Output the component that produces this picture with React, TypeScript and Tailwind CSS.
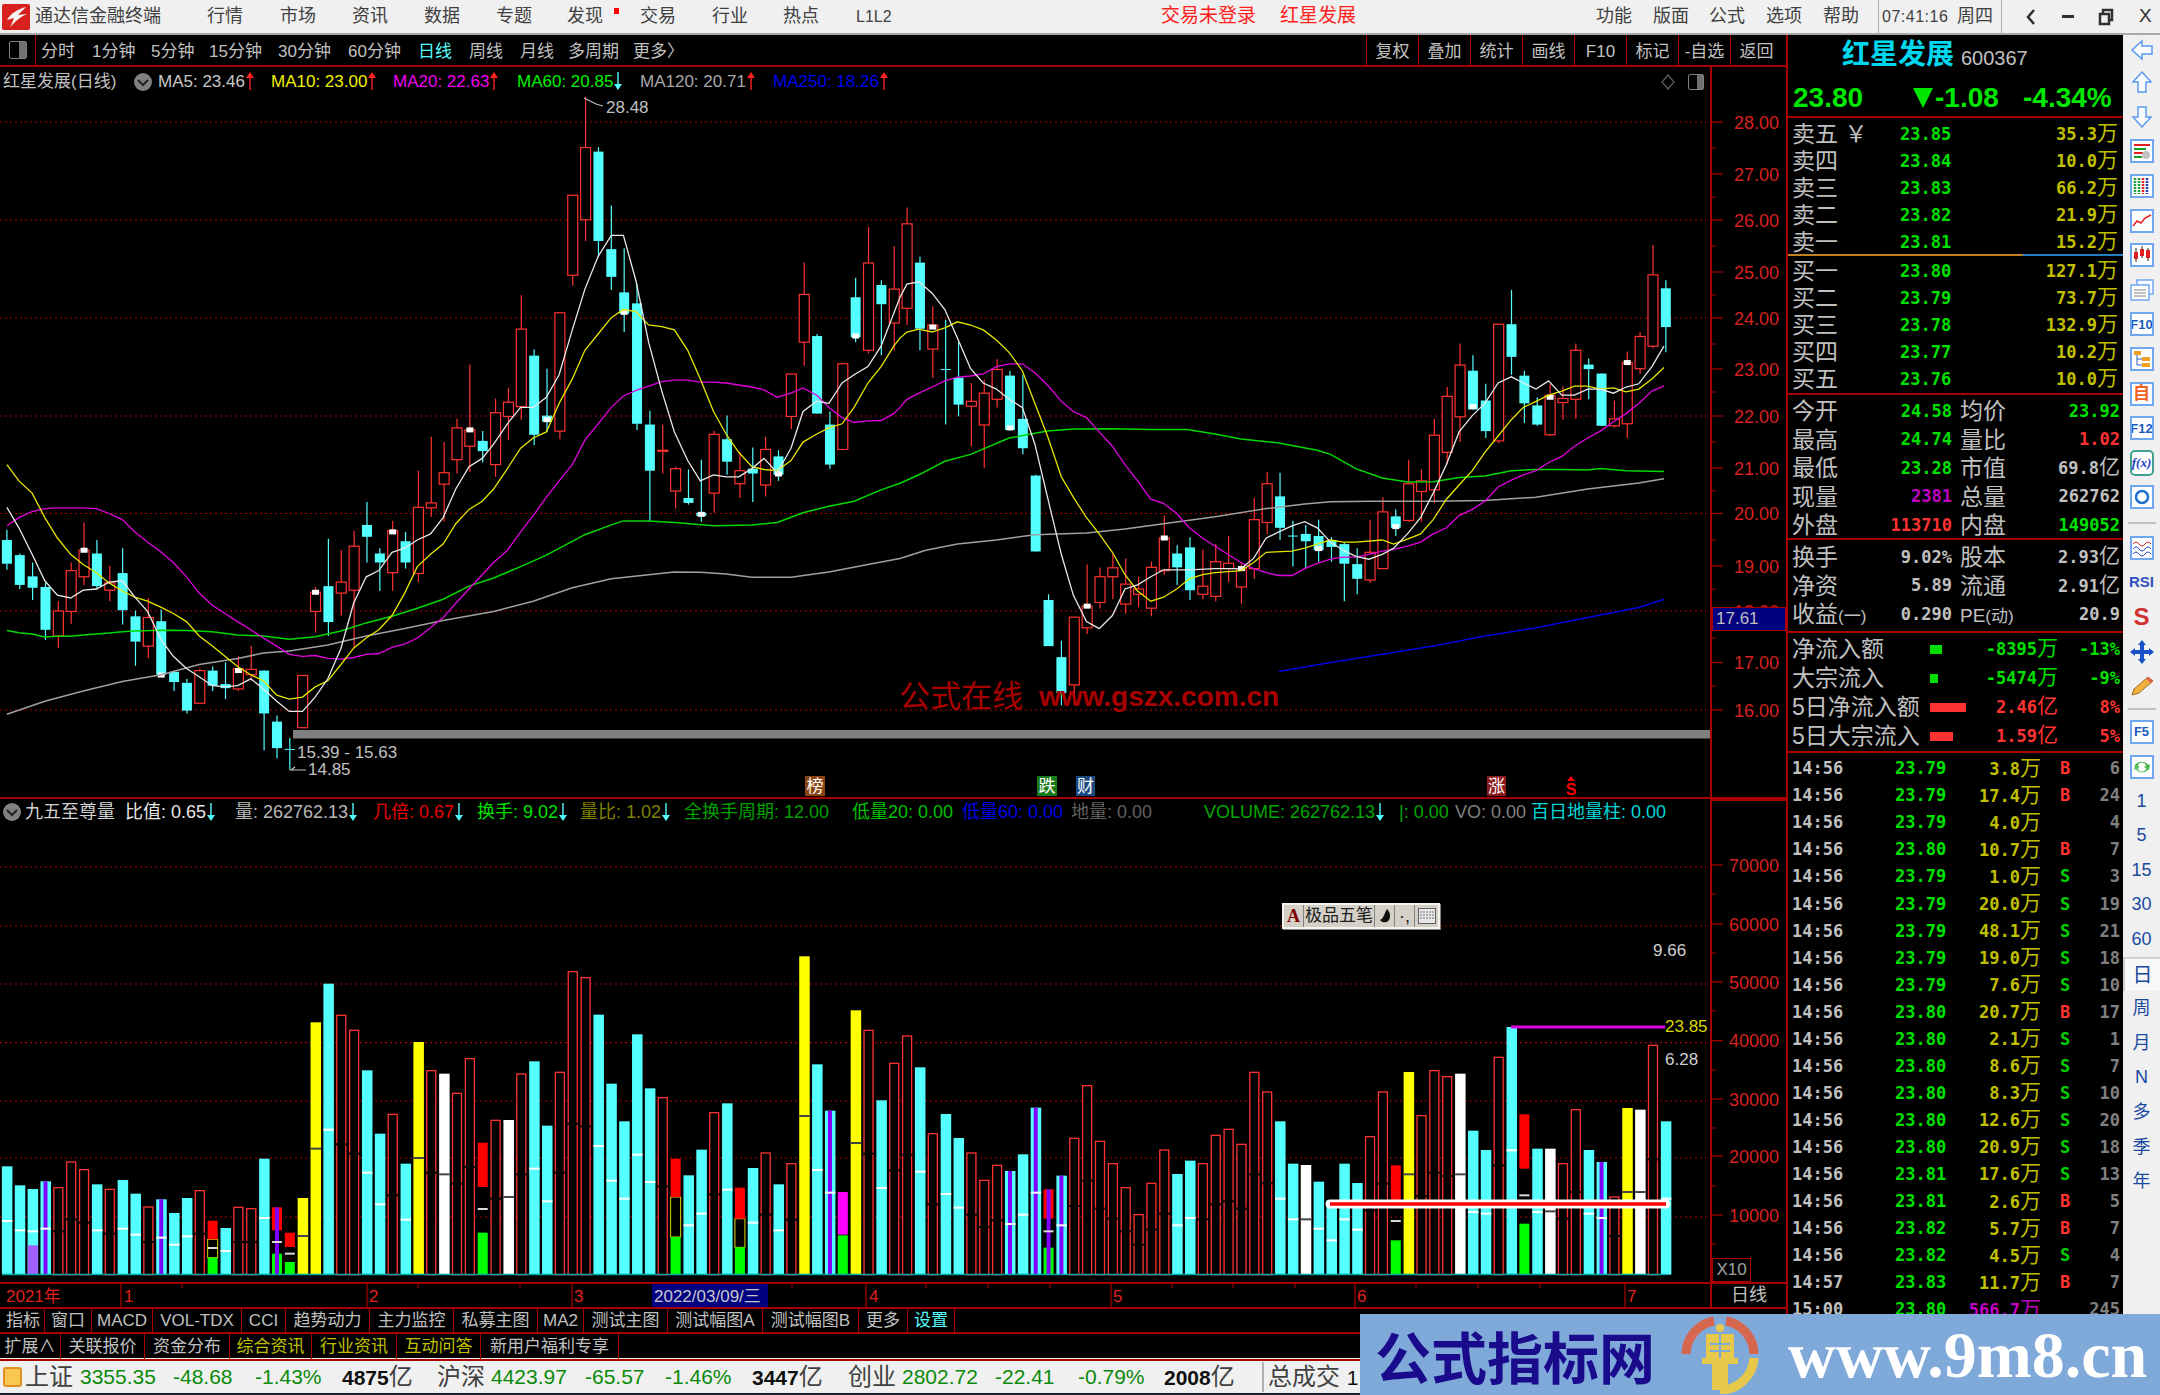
import React from 'react';

type CandleRow = [string, number, number, number, number, number?];
type VolRow = [string, number, number, number?, number?, string?];

// wick top, body top, body bottom, wick bottom, white dot
const candles: CandleRow[] = [
  ['c', 980, 1005, 1063, 1078], ['c', 1038, 1042, 1115, 1125], ['c', 1060, 1094, 1122, 1152], ['c', 1110, 1120, 1225, 1250],
  ['r', 1155, 1179, 1240, 1270], ['r', 1060, 1080, 1180, 1210], ['r', 962, 1030, 1095, 1115, 1030], ['c', 1005, 1038, 1118, 1125],
  ['r', 1068, 1110, 1128, 1155], ['c', 1025, 1086, 1177, 1212], ['c', 1178, 1192, 1254, 1313], ['r', 1147, 1195, 1265, 1295],
  ['c', 1175, 1204, 1335, 1340, 1336], ['c', 1325, 1328, 1353, 1375], ['c', 1345, 1355, 1423, 1430], ['r', 1320, 1325, 1405, 1405],
  ['c', 1315, 1325, 1362, 1375], ['c', 1305, 1358, 1368, 1395], ['r', 1290, 1320, 1370, 1375, 1325], ['r', 1265, 1322, 1335, 1350],
  ['c', 1325, 1325, 1430, 1520], ['c', 1435, 1450, 1515, 1540], ['c', 1490, 1517, 1519, 1568], ['r', 1337, 1337, 1465, 1465],
  ['r', 1120, 1133, 1180, 1232, 1133], ['c', 1002, 1118, 1206, 1240], ['r', 1030, 1108, 1135, 1190], ['r', 982, 1020, 1128, 1270],
  ['c', 912, 968, 997, 1060], ['c', 1025, 1038, 1060, 1130], ['r', 958, 982, 1085, 1130, 985], ['c', 985, 1008, 1060, 1075],
  ['r', 835, 925, 1087, 1108], ['r', 752, 914, 926, 948], ['r', 765, 840, 868, 960], ['r', 708, 730, 808, 842],
  ['r', 575, 735, 775, 838, 735], ['c', 738, 762, 787, 815], ['r', 658, 693, 820, 850], ['r', 632, 667, 702, 760],
  ['r', 405, 488, 678, 710], ['c', 538, 553, 747, 772], ['c', 585, 700, 715, 740, 710], ['r', 448, 448, 738, 758],
  ['r', 160, 160, 356, 382], ['r', -82, 43, 220, 272], ['c', 42, 53, 272, 312], ['c', 185, 292, 360, 392],
  ['c', 290, 398, 450, 495, 447], ['c', 378, 425, 720, 735], ['c', 688, 722, 835, 958], ['r', 722, 785, 787, 842],
  ['r', 825, 830, 885, 928], ['c', 832, 902, 914, 918], ['c', 808, 938, 946, 960, 942], ['r', 738, 746, 890, 938],
  ['c', 700, 758, 813, 845], ['r', 790, 835, 867, 902], ['c', 778, 830, 842, 912], ['r', 752, 783, 870, 898],
  ['c', 785, 800, 845, 860, 843], ['r', 598, 598, 702, 733], ['r', 325, 403, 520, 578], ['c', 500, 505, 695, 695],
  ['c', 690, 722, 820, 830], ['r', 573, 573, 783, 783], ['c', 362, 410, 508, 520, 505], ['r', 238, 326, 540, 548],
  ['c', 368, 380, 427, 552], ['r', 285, 390, 473, 540],
  ['r', 190, 230, 437, 478], ['c', 310, 325, 487, 540], ['r', 432, 478, 537, 607, 483], ['c', 465, 586, 588, 722],
  ['c', 520, 607, 673, 702], ['r', 620, 665, 677, 775], ['r', 612, 645, 723, 828], ['r', 562, 587, 660, 680],
  ['c', 590, 602, 735, 738, 730], ['c', 600, 708, 780, 795], ['c', 845, 847, 1033, 1033], ['c', 1138, 1152, 1265, 1265],
  ['c', 1252, 1292, 1380, 1410], ['r', 1194, 1194, 1360, 1410], ['r', 1065, 1167, 1220, 1235, 1167], ['r', 1072, 1095, 1158, 1173],
  ['r', 1040, 1073, 1095, 1150], ['r', 1050, 1113, 1162, 1185], ['r', 1095, 1125, 1138, 1170], ['r', 1058, 1072, 1172, 1192],
  ['r', 945, 1000, 1080, 1090, 1000], ['c', 1018, 1038, 1072, 1115], ['c', 998, 1023, 1128, 1152], ['r', 1028, 1118, 1138, 1150],
  ['r', 1015, 1058, 1143, 1155], ['r', 995, 1062, 1075, 1108], ['r', 1060, 1075, 1120, 1162, 1075], ['r', 902, 955, 1075, 1100],
  ['r', 838, 867, 962, 990], ['c', 840, 898, 975, 1005], ['c', 958, 994, 996, 1070], ['c', 968, 990, 1008, 1075],
  ['c', 955, 995, 1030, 1058, 1026], ['c', 998, 1005, 1022, 1058], ['c', 1012, 1015, 1063, 1155], ['c', 1025, 1064, 1100, 1138],
  ['r', 955, 1035, 1103, 1110], ['r', 900, 936, 1075, 1075], ['c', 930, 947, 975, 995, 972], ['r', 808, 867, 957, 960],
  ['r', 832, 860, 886, 960], ['r', 708, 748, 882, 915], ['r', 630, 653, 790, 820], ['r', 523, 576, 703, 765],
  ['c', 552, 590, 685, 685, 678], ['c', 622, 663, 738, 755], ['r', 476, 476, 762, 768], ['c', 392, 476, 556, 600],
  ['c', 590, 602, 670, 718], ['c', 655, 675, 722, 725], ['r', 622, 650, 747, 750, 655], ['r', 628, 658, 668, 710],
  ['r', 523, 540, 660, 708], ['c', 560, 575, 586, 660], ['c', 597, 597, 725, 725], ['r', 663, 708, 725, 730],
  ['r', 543, 570, 720, 755, 570], ['r', 495, 506, 585, 598], ['r', 282, 355, 530, 535], ['c', 368, 388, 483, 545],
];

const L = (p: number[]) => {
  const out: string[] = [];
  for (let i = 0; i < p.length; i += 2) out.push((p[i] * 0.574).toFixed(1) + ',' + (130 + p[i + 1] * 0.408).toFixed(1));
  return out.join(' ');
};
const R = (p: number[]) => {
  const out: string[] = [];
  for (let i = 0; i < p.length; i += 2) out.push((900 + p[i] * 0.574).toFixed(1) + ',' + (130 + p[i + 1] * 0.408).toFixed(1));
  return out.join(' ');
};

const ma5 = L([12,925,33,975,56,1040,78,1105,100,1140,123,1147,145,1128,168,1125,190,1108,213,1105,235,1145,257,1180,281,1250,302,1290,325,1320,347,1340,370,1362,392,1365,414,1362,437,1345,459,1370,482,1400,504,1425,527,1425,549,1390,571,1345,594,1270,616,1160,638,1095,660,1080,683,1035,705,1025,727,1005,750,990,772,950,794,880,817,825,840,805,860,770,884,720,907,680,929,680,952,655,974,600,997,490,1019,390,1042,310,1065,258,1086,258,1108,370,1130,520,1153,640,1175,740,1198,810,1220,860,1243,845,1265,850,1287,850,1310,830,1331,805,1354,840,1378,780,1399,690,1423,665,1444,670,1467,620,1488,600,1512,580,1535,530,1557,450,1568,410])
  + ' ' + R([12,378,33,372,56,400,78,440,100,510,123,585,145,620,168,635,190,660,213,680,235,770,257,900,281,1040,302,1140,325,1205,347,1222,370,1190,392,1125,414,1115,437,1095,459,1078,482,1078,504,1078,549,1075,594,1075,616,1050,638,1000,660,985,683,970,705,960,727,975,750,1010,772,1030,794,1045,817,1052,840,1040,860,1025,884,990,907,950,929,890,952,820,974,740,997,700,1019,670,1042,620,1065,605,1086,620,1108,635,1130,615,1153,650,1175,650,1198,635,1220,635,1243,645,1265,630,1287,622,1310,580,1331,530]);
const ma10 = L([12,820,33,860,56,890,78,950,100,1000,123,1040,145,1065,168,1085,190,1110,213,1130,235,1145,257,1155,281,1170,302,1185,325,1205,347,1240,370,1265,392,1290,414,1315,437,1335,459,1350,482,1385,504,1395,527,1390,549,1365,571,1350,594,1310,616,1270,638,1245,660,1225,683,1190,705,1135,727,1070,750,1040,772,1015,794,965,817,930,840,910,860,880,884,830,907,780,929,755,952,740,974,670,997,610,1019,540,1042,500,1065,460,1086,440,1108,445,1130,478,1153,482,1175,490,1198,540,1220,610,1243,690,1265,745,1287,790,1310,825,1331,832,1354,835,1378,810,1399,765,1423,745,1444,730,1467,720,1488,680,1512,620,1535,580,1557,530,1568,510])
  + ' ' + R([12,495,33,488,56,495,78,485,100,470,123,478,145,490,168,515,190,545,213,590,235,670,257,750,281,850,302,900,325,950,347,990,370,1035,392,1090,414,1130,437,1155,459,1145,482,1125,504,1100,527,1090,549,1085,594,1080,616,1060,638,1035,683,1032,705,1025,727,1015,750,1005,772,1010,794,1010,840,1005,860,1015,884,1003,907,990,929,955,952,905,974,870,997,835,1019,790,1042,750,1065,710,1086,680,1108,665,1130,650,1153,640,1175,628,1198,628,1220,635,1243,632,1265,642,1287,635,1310,610,1331,582]);
const ma20 = L([12,970,33,950,56,935,78,928,100,926,123,926,145,926,168,928,190,940,213,955,235,985,257,1010,281,1035,302,1060,325,1095,347,1135,370,1165,392,1185,414,1205,437,1225,459,1245,482,1265,504,1285,527,1290,549,1288,571,1295,594,1297,616,1293,638,1285,660,1283,683,1268,705,1260,727,1245,750,1220,772,1195,794,1160,817,1125,840,1090,860,1060,884,1030,907,985,929,945,952,900,974,860,997,820,1019,760,1042,720,1065,680,1086,652,1108,638,1130,628,1153,617,1175,613,1198,613,1220,618,1243,618,1265,620,1287,625,1310,630,1331,637,1354,655,1378,645,1399,632,1423,650,1444,680,1467,705,1488,717,1512,713,1535,712,1557,695,1568,680])
  + ' ' + R([12,660,33,645,56,630,78,615,100,606,123,603,145,598,168,580,190,573,213,573,235,595,257,625,281,665,302,690,325,705,347,740,370,775,392,820,414,860,437,905,459,915,482,940,504,975,527,1000,549,1020,571,1040,594,1060,616,1075,638,1085,660,1092,683,1092,705,1075,727,1062,750,1052,772,1047,794,1047,817,1040,840,1032,860,1028,884,1020,907,1010,929,990,952,975,974,945,997,930,1019,910,1042,875,1065,858,1086,845,1108,835,1130,815,1153,800,1175,775,1198,755,1220,738,1243,715,1265,695,1287,670,1310,640,1331,627]);
const ma60 = L([12,1227,33,1232,56,1235,78,1243,100,1241,123,1241,145,1238,168,1235,190,1233,213,1230,235,1228,281,1226,325,1227,370,1230,414,1238,459,1240,504,1248,549,1242,594,1228,638,1208,683,1192,727,1172,772,1150,817,1118,860,1098,907,1070,952,1042,1019,992,1065,968,1086,958,1130,958,1175,962,1243,970,1310,968,1354,962,1399,938,1444,922,1488,910,1535,882,1568,866])
  + ' ' + R([33,845,78,812,123,795,190,755,257,738,302,733,370,732,437,734,500,734,549,745,594,757,660,767,727,785,750,795,794,830,840,853,884,863,929,862,974,852,1019,848,1065,835,1108,832,1153,832,1198,833,1220,830,1265,835,1331,837]);
const ma120 = L([12,1432,78,1400,145,1375,213,1352,281,1335,347,1310,414,1295,459,1282,504,1277,571,1262,638,1240,705,1222,772,1202,860,1180,929,1155,997,1122,1065,1100,1130,1090,1175,1083,1220,1084,1265,1088,1310,1096,1378,1096,1444,1083,1512,1065,1568,1050])
  + ' ' + R([45,1030,100,1015,168,1005,235,992,325,988,392,978,459,965,549,948,638,928,705,917,750,911,817,910,929,910,1019,908,1108,900,1198,880,1287,865,1331,855]);
const ma250 = R([660,1327,750,1305,840,1285,929,1265,1019,1240,1108,1220,1198,1195,1287,1170,1331,1150]);

// kind, top, mid  ('s' rows: red top, red bottom, green top, mid, colour)
const volumes: VolRow[] = [
  ['c',643,807],['c',700,835],['d',711,838],['p',688,830],['r',707,838],['r',630,802],['r',653,812],['c',697,835],['r',712,845],['c',684,830],
  ['c',725,848],['r',765,870],['p',742,857],['c',783,878],['c',738,853],['r',716,845],['s',806,862,917,888],['c',828,897],['r',766,870],['r',770,870],
  ['c',620,798],['s',766,835,905,870,'#ff0000'],['s',842,885,930,905],['y',738,852],['y',211,590],['c',95,533],['r',190,577],['r',235,605],['c',355,662],['c',545,757],
  ['r',487,730],['c',635,803],['y',270,618],['r',356,662],['w',365,667],['r',424,695],['r',320,645],['s',572,705,842,771],['r',505,740],['w',504,735],
  ['r',366,667],['c',328,650],['c',521,748],['r',361,662],['r',59,515],['r',77,523],['c',188,582],['c',395,686],['c',508,740],['c',247,608],
  ['c',409,690],['r',437,703],['s',620,735,855,0],['c',670,820],['c',593,785],['r',482,727],['c',454,713],['s',707,800,886,0],['c',648,812],['r',603,788],
  ['c',697,835],['r',635,803],['y',13,492],['c',337,654],['p',476,722],['s',720,848,850,0,'#ff00ff'],['y',175,573],['r',235,605],['c',445,708],['r',334,655],
  ['r',252,608],['c',346,659],['r',545,757],['c',486,726],['c',558,767],['r',603,788],['r',685,825],['r',640,805],['p',657,816],['c',607,788],
  ['p',467,722],['s',712,800,887,838],['p',671,820],['r',559,762],['r',401,686],['r',568,770],['r',635,800],['r',707,838],['r',788,878],['r',694,833],
  ['r',594,785],['c',666,820],['c',626,798],['r',635,802],['r',550,757],['r',532,748],['r',577,770],['r',361,667],['r',420,694],['c',508,740],
  ['c',635,802],['w',639,802],['c',689,830],['c',745,865],['c',635,802],['c',693,833],['r',554,775],['r',420,695],['s',640,745,865,807],['y',360,667],
  ['r',491,732],['r',356,662],['r',374,672],['w',365,667],['c',536,780],['c',594,785],['r',316,640],['c',225,595],['s',487,650,815,730],['c',590,780],
  ['w',590,778],['r',635,800],['r',473,720],['c',594,785],['p',630,798],['r',735,852],['y',468,720],['w',473,720],['r',280,622],['c',508,740],
];

const cx = (i: number) => 6.9 + i * 12.86;
const py = (z: number) => 130 + z * 0.408;
const vy = (z: number) => 950 + z / 3;
const CYAN = '#54ffff';
const RED = '#ff3232';
const priceGrid = [122, 220, 318, 416, 513.5, 611, 710];
const priceLabels: [string, number][] = [['28.00',122],['27.00',174],['26.00',220],['25.00',272],['24.00',318],['23.00',369],['22.00',416],['21.00',468],['20.00',513.5],['19.00',566],['18.00',611],['17.00',662.5],['16.00',710]];
const volLabels: [string, number][] = [['70000',865],['60000',924],['50000',982],['40000',1040.7],['30000',1099],['20000',1156],['10000',1215]];

function PriceChart() {
  return (
    <svg className="block w-[1710px] h-[700px]" viewBox="0 97 1710 700">
      {priceGrid.map(y => <line key={y} x1="0" x2="1710" y1={y} y2={y} stroke="#b00000" strokeWidth="1.2" strokeDasharray="2 3" />)}
      <rect x="293" y="730" width="1417" height="8.5" fill="#808080" />
      {candles.map((c, i) => {
        const x = cx(i);
        const color = c[0] === 'r' ? RED : CYAN;
        return (
          <g key={i}>
            <line x1={x} x2={x} y1={py(c[1])} y2={py(c[4])} stroke={color} strokeWidth="1.2" />
            <rect x={x - 5} y={py(c[2])} width="10" height={Math.max(1, py(c[3]) - py(c[2]))} fill={c[0] === 'r' ? '#000' : CYAN} stroke={c[0] === 'r' ? RED : 'none'} strokeWidth="1.2" />
            {c[5] !== undefined && <rect x={x - 3.5} y={py(c[5]) - 2.5} width="7" height="5" fill="#fff" />}
          </g>
        );
      })}
      <polyline points={ma120} fill="none" stroke="#a0a0a0" strokeWidth="1.5" />
      <polyline points={ma250} fill="none" stroke="#0000e0" strokeWidth="1.5" />
      <polyline points={ma60} fill="none" stroke="#00d800" strokeWidth="1.5" />
      <polyline points={ma20} fill="none" stroke="#e000e0" strokeWidth="1.3" />
      <polyline points={ma10} fill="none" stroke="#e6e600" strokeWidth="1.3" />
      <polyline points={ma5} fill="none" stroke="#e8e8e8" strokeWidth="1.3" />
      <polyline points="584,98 596,104 603,106" fill="none" stroke="#c0c0c0" strokeWidth="1.2" />
      <text x="606" y="113" fontSize="17" fill="#c0c0c0">28.48</text>
      <text x="297" y="758" fontSize="17" fill="#c0c0c0">15.39 - 15.63</text>
      <polyline points="306,770 291,770 295,767" fill="none" stroke="#c0c0c0" strokeWidth="1.2" />
      <text x="308" y="775" fontSize="17" fill="#c0c0c0">14.85</text>
      <text x="899" y="707" fontSize="31" fill="#a80000">公式在线</text>
      <text x="1039" y="706" fontSize="28" fontWeight="700" fill="#a80000">www.gszx.com.cn</text>
      <rect x="805" y="776" width="20" height="20" fill="#8b4513" />
      <text x="815" y="792" fontSize="17" fill="#fff" textAnchor="middle">榜</text>
      <rect x="1037" y="776" width="20" height="20" fill="#1a7a1a" />
      <text x="1047" y="792" fontSize="17" fill="#fff" textAnchor="middle">跌</text>
      <rect x="1076" y="776" width="19" height="20" fill="#1a4a80" />
      <text x="1085.5" y="792" fontSize="17" fill="#fff" textAnchor="middle">财</text>
      <rect x="1487" y="776" width="19" height="20" fill="#8b1a1a" />
      <text x="1496.5" y="792" fontSize="17" fill="#fff" textAnchor="middle">涨</text>
      <polygon points="1571,776 1567,781 1575,781" fill="#ff0000" />
      <text x="1571" y="795" fontSize="16" fontWeight="700" fill="#ff0000" textAnchor="middle">S</text>
    </svg>
  );
}

function VolumeChart() {
  const h = (top: number) => vy(968) - vy(top);
  return (
    <svg className="block w-[1710px] h-[452px]" viewBox="0 830 1710 452">
      {volLabels.map(l => <line key={l[0]} x1="0" x2="1710" y1={l[1]} y2={l[1]} stroke="#b00000" strokeWidth="1.2" strokeDasharray="2 3" />)}
      {volumes.map((v, i) => {
        const x = cx(i);
        const k = v[0];
        if (k === 's') {
          const mid = v[4];
          const gt = v[3] as number;
          return (
            <g key={i}>
              {(i === 16 || i === 52 || i === 57) && <rect x={x - 5} y={vy(v[2])} width="10" height={vy(gt) - vy(v[2])} fill="#000" stroke="#d8d800" strokeWidth="1" />}
              <rect x={x - 5} y={vy(v[1])} width="10" height={vy(v[2]) - vy(v[1])} fill={v[5] || '#ff0000'} />
              <rect x={x - 5} y={vy(gt)} width="10" height={vy(968) - vy(gt)} fill="#00ff00" />
              {(i === 21 || i === 81) && <rect x={x - 2} y={vy(v[1])} width="4" height={h(v[1])} fill="#8000ff" />}
              {!!mid && <rect x={x - 5} y={vy(mid) - 1} width="10" height="2" fill="#d8d8d8" />}
            </g>
          );
        }
        if (k === 'r') {
          return (
            <g key={i}>
              <rect x={x - 4.5} y={vy(v[1])} width="9" height={h(v[1])} fill="#000" stroke={RED} strokeWidth="1.3" />
              <rect x={x - 6} y={vy(v[2]) - 1} width="12" height="2" fill="#000" />
            </g>
          );
        }
        const fill = k === 'y' ? '#ffff00' : k === 'w' ? '#ffffff' : CYAN;
        return (
          <g key={i}>
            <rect x={x - 5} y={vy(v[1])} width="10.5" height={h(v[1])} fill={fill} />
            {k === 'p' && <rect x={x - 2} y={vy(v[1])} width="4" height={h(v[1])} fill="#8000ff" />}
            {k === 'd' && <rect x={x - 5} y={vy(880)} width="10.5" height={vy(968) - vy(880)} fill="#a060ff" />}
            <rect x={x - 5} y={vy(v[2]) - 1} width="10.5" height="2" fill={k === 'c' || k === 'p' || k === 'd' ? '#ffffff' : '#444444'} />
          </g>
        );
      })}
      <line x1="2" x2="1666" y1="1272.5" y2="1272.5" stroke="#00a8a8" strokeWidth="1.5" />
      <line x1="1330" x2="1666" y1="1202" y2="1202" stroke="#ffffff" strokeWidth="9" strokeLinecap="round" />
      <line x1="1330" x2="1666" y1="1202" y2="1202" stroke="#ff0000" strokeWidth="3.5" />
      <line x1="1511" x2="1665" y1="1025" y2="1025" stroke="#e000e0" strokeWidth="3" />
      <text x="1653" y="954" fontSize="17" fill="#d0d0d0">9.66</text>
      <text x="1665" y="1030" fontSize="17" fill="#d8d800">23.85</text>
      <text x="1665" y="1063" fontSize="17" fill="#d0d0d0">6.28</text>
    </svg>
  );
}

function AxisLabels({ labels, top, height, ticks }: { labels: [string, number][]; top: number; height: number; ticks: number[] }) {
  return (
    <svg className="block w-[75px]" height={height} viewBox={`1711 ${top} 75 ${height}`}>
      {ticks.map(y => <line key={y} x1="1711" x2="1715" y1={y} y2={y} stroke="#b00000" />)}
      {labels.map(l => (
        <g key={l[0]}>
          <line x1="1711" x2="1722" y1={l[1]} y2={l[1]} stroke="#b00000" strokeWidth="1.2" />
          <text x="1778" y={l[1] + 6.5} textAnchor="end" fontSize="18" fill="#d82020">{l[0]}</text>
        </g>
      ))}
    </svg>
  );
}

function DateAxis() {
  return (
    <svg className="block w-[1710px] h-[23px]" viewBox="0 0 1710 23">
      {[121, 367, 572, 866, 1111, 1355, 1625].map(x => <line key={x} x1={x} x2={x} y1="0" y2="23" stroke="#b00000" strokeWidth="1.2" />)}
      {[182, 418, 520, 792, 926, 988, 1050, 1172, 1233, 1295, 1416, 1478, 1540].map(x => <line key={x} x1={x} x2={x} y1="0" y2="4" stroke="#b00000" />)}
      <text x="6" y="18" fontSize="17" fill="#e02020">2021年</text>
      <text x="124" y="18" fontSize="17" fill="#e02020">1</text>
      <text x="369" y="18" fontSize="17" fill="#e02020">2</text>
      <text x="574" y="18" fontSize="17" fill="#e02020">3</text>
      <rect x="652" y="0" width="116" height="23" fill="#000080" />
      <text x="654" y="18" fontSize="17" fill="#c8c8c8">2022/03/09/三</text>
      <text x="869" y="18" fontSize="17" fill="#e02020">4</text>
      <text x="1113" y="18" fontSize="17" fill="#e02020">5</text>
      <text x="1357" y="18" fontSize="17" fill="#e02020">6</text>
      <text x="1627" y="18" fontSize="17" fill="#e02020">7</text>
    </svg>
  );
}

const Up = () => (
  <svg className="inline-block ml-[1px] align-[-3px]" width="8" height="18" viewBox="0 0 8 18">
    <line x1="4" x2="4" y1="2" y2="18" stroke="#ff2020" strokeWidth="1.4" />
    <polygon points="4,0 0,6 8,6" fill="#ff2020" />
  </svg>
);

const Down = () => (
  <svg className="inline-block ml-[1px] align-[-3px]" width="8" height="18" viewBox="0 0 8 18">
    <line x1="4" x2="4" y1="0" y2="14" stroke="#54ffff" strokeWidth="1.4" />
    <polygon points="4,18 0,12 8,12" fill="#54ffff" />
  </svg>
);

const Chevron = () => (
  <svg className="inline-block" width="18" height="18" viewBox="0 0 18 18">
    <circle cx="9" cy="9" r="9" fill="#808080" />
    <polyline points="4,7 9,12 14,7" fill="none" stroke="#222" strokeWidth="2" />
  </svg>
);

function TitleBar() {
  return (
    <div className="h-[35px] bg-[#f0f0f0] border-b-2 border-[#a8a8a8] flex items-center text-[18px] text-[#404040]">
      <svg className="ml-[2px]" width="28" height="26" viewBox="0 0 28 26">
        <rect width="28" height="26" rx="2" fill="#d8201c" />
        <path d="M24 3 C16 5 9 9 5 16 L12 14 L8 24 C12 18 18 13 25 10 L16 11 Z" fill="#f4f4f4" />
      </svg>
      <span className="ml-[5px] w-[172px]">通达信金融终端</span>
      <span className="w-[73px]">行情</span>
      <span className="w-[72px]">市场</span>
      <span className="w-[72px]">资讯</span>
      <span className="w-[72px]">数据</span>
      <span className="w-[71px]">专题</span>
      <span className="w-[47px] relative">发现<span className="absolute left-[47px] top-[5px] w-[5px] h-[6px] bg-[#ff0000]" /></span>
      <span className="w-[26px]" />
      <span className="w-[72px]">交易</span>
      <span className="w-[71px]">行业</span>
      <span className="w-[73px]">热点</span>
      <span className="w-[305px] text-[16px]">L1L2</span>
      <span className="w-[119px] text-[#ff2020] text-[19px]">交易未登录</span>
      <span className="w-[316px] text-[#ff2020] text-[19px]">红星发展</span>
      <span className="w-[57px]">功能</span>
      <span className="w-[56px]">版面</span>
      <span className="w-[57px]">公式</span>
      <span className="w-[57px]">选项</span>
      <span className="w-[55px]">帮助</span>
      <span className="w-[79px] h-[33px] border-l border-[#b0b0b0] pl-[3px] leading-[33px] text-[16px] tracking-[0.5px]">07:41:16</span>
      <span className="w-[44px]">周四</span>
      <span className="h-[33px] border-l border-[#b0b0b0] w-[24px]" />
      <svg width="12" height="18" viewBox="0 0 12 18"><polyline points="9,2 3,9 9,16" fill="none" stroke="#303030" strokeWidth="2.5" /></svg>
      <span className="w-[25px]" />
      <span className="w-[12px] h-[3px] bg-[#303030]" />
      <span className="w-[24px]" />
      <svg width="16" height="18" viewBox="0 0 16 18"><rect x="5" y="2" width="9" height="10" fill="none" stroke="#303030" strokeWidth="2.5" /><rect x="2" y="6" width="9" height="10" fill="#f0f0f0" stroke="#303030" strokeWidth="2.5" /></svg>
      <span className="w-[25px]" />
      <span className="text-[#303030] text-[19px]">X</span>
    </div>
  );
}

function Toolbar() {
  const cells = ['复权', '叠加', '统计', '画线', 'F10', '标记', '-自选', '返回'];
  return (
    <div className="h-[32px] flex border-b-2 border-[#a80000] text-[17px] text-[#c0c0c0]">
      <div className="w-[36px] h-[30px] border-r border-[#a80000] flex items-center justify-center">
        <span className="w-[18px] h-[18px] border border-[#808080] rounded-[2px] flex justify-end">
          <span className="w-[7px] h-full bg-[#707070]" />
        </span>
      </div>
      <div className="flex items-center pt-[3px]">
        <span className="ml-[5px] w-[51px]">分时</span>
        <span className="w-[59px]">1分钟</span>
        <span className="w-[58px]">5分钟</span>
        <span className="w-[69px]">15分钟</span>
        <span className="w-[70px]">30分钟</span>
        <span className="w-[70px]">60分钟</span>
        <span className="w-[51px] text-[#54ffff]">日线</span>
        <span className="w-[51px]">周线</span>
        <span className="w-[48px]">月线</span>
        <span className="w-[65px]">多周期</span>
        <span className="w-[733px]">更多〉</span>
      </div>
      {cells.map(c => (
        <span key={c} className="w-[52px] h-[30px] border-l border-[#a80000] pt-[3px] flex items-center justify-center">{c}</span>
      ))}
    </div>
  );
}

function PriceInfo() {
  return (
    <div className="h-[30px] flex items-center pl-[3px] text-[17px] whitespace-nowrap relative">
      <span className="w-[131px] text-[#c0c0c0]">红星发展(日线)</span>
      <span className="w-[24px] flex"><Chevron /></span>
      <span className="w-[113px] text-[#c8c8c8]">MA5: 23.46<Up /></span>
      <span className="w-[122px] text-[#f0f000]">MA10: 23.00<Up /></span>
      <span className="w-[124px] text-[#f000f0]">MA20: 22.63<Up /></span>
      <span className="w-[123px] text-[#00f000]">MA60: 20.85<Down /></span>
      <span className="w-[133px] text-[#a8a8a8]">MA120: 20.71<Up /></span>
      <span className="w-[120px] text-[#0000f0]">MA250: 18.26<Up /></span>
      <svg className="absolute left-[1660px] top-[7px]" width="16" height="16" viewBox="0 0 16 16"><polygon points="8,1 14,8 8,15 2,8" fill="none" stroke="#606060" strokeWidth="1.2" /></svg>
      <span className="absolute left-[1688px] top-[7px] w-[16px] h-[16px] border border-[#808080] rounded-[2px] flex justify-end"><span className="w-[6px] h-full bg-[#707070]" /></span>
    </div>
  );
}

function VolumeInfo() {
  return (
    <div className="h-[33px] flex items-center pl-[3px] pb-[7px] text-[18px] whitespace-nowrap">
      <span className="w-[22px] flex"><Chevron /></span>
      <span className="w-[100px] text-[#d0d0d0]">九五至尊量</span>
      <span className="w-[110px] text-[#e8e8e8]">比值: 0.65<Down /></span>
      <span className="w-[138px] text-[#b8b8b8]">量: 262762.13<Down /></span>
      <span className="w-[104px] text-[#e80000]">几倍: 0.67<Down /></span>
      <span className="w-[103px] text-[#00e000]">换手: 9.02<Down /></span>
      <span className="w-[104px] text-[#808000]">量比: 1.02<Down /></span>
      <span className="w-[168px] text-[#00a000]">全换手周期: 12.00</span>
      <span className="w-[110px] text-[#00c000]">低量20: 0.00</span>
      <span className="w-[109px] text-[#0000e8]">低量60: 0.00</span>
      <span className="w-[133px] text-[#606060]">地量: 0.00</span>
      <span className="w-[195px] text-[#00a800]">VOLUME: 262762.13<Down /></span>
      <span className="w-[56px] text-[#00a800]">|: 0.00</span>
      <span className="w-[76px] text-[#808080]">VO: 0.00</span>
      <span className="text-[#00d8d8]">百日地量柱: 0.00</span>
    </div>
  );
}

function ImeBar() {
  return (
    <div className="absolute left-[1282px] top-[903px] w-[158px] h-[26px] bg-[#d4d0c8] border-2 border-[#f4f4ec] shadow-[1px_1px_0_#808080] flex items-stretch text-[18px] text-[#202020] leading-[22px]">
      <span className="w-[20px] text-center font-['Liberation_Serif',serif] font-bold text-[#800000] border-r border-[#808080]">A</span>
      <span className="w-[71px] text-center border-r border-[#808080] whitespace-nowrap text-[17px]">极品五笔</span>
      <span className="w-[20px] flex items-center justify-center border-r border-[#808080]">
        <svg width="12" height="16" viewBox="0 0 12 16"><path d="M8 1 C5 6 5 10 1 12 C4 16 11 15 11 8 C11 5 10 3 8 1 Z" fill="#101010" /></svg>
      </span>
      <span className="w-[20px] text-center border-r border-[#808080]">·,</span>
      <span className="flex-1 flex items-center justify-center">
        <svg width="18" height="16" viewBox="0 0 18 16"><rect x="0.5" y="0.5" width="17" height="15" fill="#e8e8e8" stroke="#606060" /><path d="M2 4h14M2 7h14M2 10h14" stroke="#707070" strokeDasharray="2 1" /></svg>
      </span>
    </div>
  );
}

function TabRows() {
  const first: [string, string][] = [
    ['指标', 'w-[43px]'], ['窗口', 'w-[47px]'], ['MACD', 'w-[61px]'], ['VOL-TDX', 'w-[89px]'], ['CCI', 'w-[44px]'], ['趋势动力', 'w-[84px]'], ['主力监控', 'w-[84px]'], ['私募主图', 'w-[84px]'], ['MA2', 'w-[46px]'], ['测试主图', 'w-[84px]'], ['测试幅图A', 'w-[95px]'], ['测试幅图B', 'w-[96px]'], ['更多', 'w-[49px]'],
  ];
  const second: [string, string, string][] = [
    ['扩展∧', 'w-[61px]', 'text-[#c0c0c0]'], ['关联报价', 'w-[84px]', 'text-[#c0c0c0]'], ['资金分布', 'w-[85px]', 'text-[#c0c0c0]'], ['综合资讯', 'w-[82px]', 'text-[#c0c000]'], ['行业资讯', 'w-[85px]', 'text-[#c0c000]'], ['互动问答', 'w-[84px]', 'text-[#c0c000]'], ['新用户福利专享', 'w-[138px]', 'text-[#c0c0c0]'],
  ];
  return (
    <div className="text-[17px]">
      <div className="h-[25px] flex pl-[2px] border-b-2 border-[#a80000] text-[#c0c0c0]">
        {first.map(t => (
          <span key={t[0]} className={`${t[1]} border-r border-[#a80000] flex items-center justify-center whitespace-nowrap`}>{t[0]}</span>
        ))}
        <span className="w-[47px] flex items-center justify-center text-[#54ffff] border-r border-[#a80000]">设置</span>
      </div>
      <div className="h-[27px] flex text-[#c0c0c0] border-b-2 border-[#a80000]">
        {second.map(t => (
          <span key={t[0]} className={`${t[1]} ${t[2]} border-r border-[#a80000] flex items-center justify-center whitespace-nowrap`}>{t[0]}</span>
        ))}
      </div>
    </div>
  );
}

const Wan = ({ c }: { c: string }) => <span className="font-['Noto_Sans_CJK_SC',sans-serif] font-normal text-[21px] leading-none">{c}</span>;
const Mono = "font-['DejaVu_Sans_Mono','Liberation_Mono',monospace] font-bold text-[17px]";
const Paren = ({ t }: { t: string }) => <span className="text-[17px]">{t}</span>;

const asks: [string, string, string][] = [['卖五 ￥', '23.85', '35.3'], ['卖四', '23.84', '10.0'], ['卖三', '23.83', '66.2'], ['卖二', '23.82', '21.9'], ['卖一', '23.81', '15.2']];
const bids: [string, string, string][] = [['买一', '23.80', '127.1'], ['买二', '23.79', '73.7'], ['买三', '23.78', '132.9'], ['买四', '23.77', '10.2'], ['买五', '23.76', '10.0']];
const ticks: [string, string, string, string, string][] = [
  ['14:56','23.79','3.8','B','6'],['14:56','23.79','17.4','B','24'],['14:56','23.79','4.0','','4'],['14:56','23.80','10.7','B','7'],['14:56','23.79','1.0','S','3'],
  ['14:56','23.79','20.0','S','19'],['14:56','23.79','48.1','S','21'],['14:56','23.79','19.0','S','18'],['14:56','23.79','7.6','S','10'],['14:56','23.80','20.7','B','17'],
  ['14:56','23.80','2.1','S','1'],['14:56','23.80','8.6','S','7'],['14:56','23.80','8.3','S','10'],['14:56','23.80','12.6','S','20'],['14:56','23.80','20.9','S','18'],
  ['14:56','23.81','17.6','S','13'],['14:56','23.81','2.6','B','5'],['14:56','23.82','5.7','B','7'],['14:56','23.82','4.5','S','4'],['14:57','23.83','11.7','B','7'],
  ['15:00','23.80','566.7','','245'],
];

function BookRow({ r }: { r: [string, string, string] }) {
  return (
    <div className="h-[27px] pt-[4px] flex items-center pl-[4px]">
      <span className="w-[108px] text-[23px] text-[#c0c0c0] whitespace-nowrap">{r[0]}</span>
      <span className={`${Mono} w-[54px] text-[#00e000]`}>{r[1]}</span>
      <span className={`${Mono} flex-1 text-right pr-[5px] text-[#c0c000]`}>{r[2]}<Wan c="万" /></span>
    </div>
  );
}

function StatRow({ a, av, ac, b, bv, bc }: { a: React.ReactNode; av: React.ReactNode; ac: string; b: React.ReactNode; bv: React.ReactNode; bc: string }) {
  return (
    <div className="h-[28.6px] pt-[4px] flex items-center pl-[4px]">
      <div className="w-[160px] flex items-center justify-between">
        <span className="text-[23px] text-[#c0c0c0]">{a}</span>
        <span className={`${Mono} ${ac}`}>{av}</span>
      </div>
      <div className="w-[160px] ml-[8px] flex items-center justify-between">
        <span className="text-[23px] text-[#c0c0c0] whitespace-nowrap">{b}</span>
        <span className={`${Mono} ${bc}`}>{bv}</span>
      </div>
    </div>
  );
}

function FlowRow({ label, bar, value, unit, pct, color }: { label: string; bar: string; value: string; unit: string; pct: string; color: string }) {
  return (
    <div className="h-[29px] pt-[4px] flex items-center pl-[4px]">
      <span className="w-[138px] text-[23px] text-[#c0c0c0] whitespace-nowrap">{label}</span>
      <span className="w-[50px] flex"><span className={`h-[9px] ${bar}`} /></span>
      <span className={`${Mono} ${color} w-[78px] text-right whitespace-nowrap`}>{value}<Wan c={unit} /></span>
      <span className={`${Mono} ${color} w-[62px] text-right`}>{pct}</span>
    </div>
  );
}

function QuotePanel() {
  return (
    <div className="w-[337px] border-l-2 border-[#a80000] flex flex-col">
      <div className="h-[83px] border-b-2 border-[#a80000]">
        <div className="h-[38px] flex items-end pl-[54px]">
          <span className="text-[28px] font-bold leading-[36px] text-[#00d8f0] w-[119px]">红星发展</span>
          <span className="text-[20px] leading-[30px] text-[#c0c0c0]">600367</span>
        </div>
        <div className="h-[43px] flex items-center font-bold text-[28px] text-[#00e600] pt-[7px]">
          <span className="w-[125px] pl-[5px]">23.80</span>
          <span className="w-[110px] flex items-center">
            <svg className="mr-[2px]" width="20" height="22" viewBox="0 0 20 22"><polygon points="0,1 20,1 10,21" fill="#00e600" /></svg>
            -1.08
          </span>
          <span>-4.34%</span>
        </div>
      </div>
      <div className="pt-[1px]">{asks.map(r => <BookRow key={r[0]} r={r} />)}</div>
      <div className="h-[2px] flex"><span className="w-[235px] bg-[#c08020]" /><span className="flex-1 bg-[#2080c0]" /></div>
      <div className="h-[139px] border-b-2 border-[#a80000]">{bids.map(r => <BookRow key={r[0]} r={r} />)}</div>
      <div className="h-[145px] border-b-2 border-[#a80000]">
        <StatRow a="今开" av="24.58" ac="text-[#00e000]" b="均价" bv="23.92" bc="text-[#00e000]" />
        <StatRow a="最高" av="24.74" ac="text-[#00e000]" b="量比" bv="1.02" bc="text-[#ff3232]" />
        <StatRow a="最低" av="23.28" ac="text-[#00e000]" b="市值" bv={<>69.8<Wan c="亿" /></>} bc="text-[#c0c0c0]" />
        <StatRow a="现量" av="2381" ac="text-[#c000c0]" b="总量" bv="262762" bc="text-[#c0c0c0]" />
        <StatRow a="外盘" av="113710" ac="text-[#ff3232]" b="内盘" bv="149052" bc="text-[#00e000]" />
      </div>
      <div className="h-[93px] border-b-2 border-[#a80000] pt-[1px]">
        <StatRow a="换手" av="9.02%" ac="text-[#c0c0c0]" b="股本" bv={<>2.93<Wan c="亿" /></>} bc="text-[#c0c0c0]" />
        <StatRow a="净资" av="5.89" ac="text-[#c0c0c0]" b="流通" bv={<>2.91<Wan c="亿" /></>} bc="text-[#c0c0c0]" />
        <StatRow a={<>收益<Paren t="(一)" /></>} av="0.290" ac="text-[#c0c0c0]" b={<span className="text-[19px]">PE<Paren t="(动)" /></span>} bv="20.9" bc="text-[#c0c0c0]" />
      </div>
      <div className="h-[120px] border-b-2 border-[#a80000]">
        <FlowRow label="净流入额" bar="w-[12px] bg-[#00e000]" value="-8395" unit="万" pct="-13%" color="text-[#00e000]" />
        <FlowRow label="大宗流入" bar="w-[8px] bg-[#00e000]" value="-5474" unit="万" pct="-9%" color="text-[#00e000]" />
        <FlowRow label="5日净流入额" bar="w-[36px] bg-[#ff3232]" value="2.46" unit="亿" pct="8%" color="text-[#ff3232]" />
        <FlowRow label="5日大宗流入" bar="w-[23px] bg-[#ff3232]" value="1.59" unit="亿" pct="5%" color="text-[#ff3232]" />
      </div>
      <div className="pt-[1px]">
        {ticks.map((t, i) => (
          <div key={i} className={`${Mono} h-[27.05px] pt-[3px] flex items-center pl-[4px]`}>
            <span className="w-[103px] text-[#c0c0c0]">{t[0]}</span>
            <span className="w-[52px] text-[#00e000]">{t[1]}</span>
            <span className={`w-[94px] text-right ${t[2] === '566.7' ? 'text-[#c000c0]' : 'text-[#c0c000]'}`}>{t[2]}<Wan c="万" /></span>
            <span className={`w-[48px] text-center ${t[3] === 'B' ? 'text-[#ff3232]' : 'text-[#00d000]'}`}>{t[3]}</span>
            <span className="w-[31px] text-right text-[#808080]">{t[4]}</span>
          </div>
        ))}
      </div>
    </div>
  );
}

const Box = ({ children }: { children: React.ReactNode }) => (
  <span className="w-[24px] h-[24px] bg-white border-2 border-[#70a8f0] flex items-center justify-center overflow-hidden text-[13px] font-bold text-[#1a5ac0] leading-none">{children}</span>
);

const Cell = ({ children }: { children: React.ReactNode }) => (
  <div className="h-[34.6px] flex items-center justify-center text-[18px] text-[#1a4aa0]">{children}</div>
);

function SideArrow({ d }: { d: string }) {
  return (
    <svg width="24" height="24" viewBox="0 0 24 24">
      <path d={d} fill="#f8fbff" stroke="#5a9af0" strokeWidth="1.5" />
    </svg>
  );
}

function Sidebar() {
  return (
    <div className="w-[37px] bg-[#f0f0f0] flex flex-col">
      <div className="h-[30px] flex items-center justify-center"><SideArrow d="M2 12 L12 3 L12 8 L22 8 L22 16 L12 16 L12 21 Z" /></div>
      <Cell><SideArrow d="M12 2 L21 12 L16 12 L16 22 L8 22 L8 12 L3 12 Z" /></Cell>
      <Cell><SideArrow d="M12 22 L21 12 L16 12 L16 2 L8 2 L8 12 L3 12 Z" /></Cell>
      <Cell><Box><svg width="20" height="20" viewBox="0 0 20 20"><path d="M2 4h16" stroke="#e02020" strokeWidth="2" /><path d="M2 8h12" stroke="#10a020" strokeWidth="2" /><path d="M2 12h10" stroke="#e02020" strokeWidth="2" /><path d="M2 16h8" stroke="#10a020" strokeWidth="2" /><circle cx="14" cy="14" r="4" fill="#c0c0c0" /></svg></Box></Cell>
      <Cell><Box><svg width="20" height="20" viewBox="0 0 20 20"><path d="M3 2v16M7 2v16" stroke="#20a030" strokeWidth="2.5" strokeDasharray="2 1" /><path d="M11 2v16" stroke="#e02020" strokeWidth="2.5" strokeDasharray="2 1" /><path d="M15 2v16" stroke="#2040c0" strokeWidth="2.5" strokeDasharray="2 1" /></svg></Box></Cell>
      <Cell><Box><svg width="20" height="20" viewBox="0 0 20 20"><polyline points="1,15 5,10 9,12 13,7 19,4" fill="none" stroke="#e02020" strokeWidth="1.5" /></svg></Box></Cell>
      <Cell><Box><svg width="20" height="20" viewBox="0 0 20 20"><path d="M4 3v14M10 1v12M16 3v13" stroke="#202020" /><rect x="2" y="7" width="4" height="7" fill="#e02020" /><rect x="8" y="4" width="4" height="7" fill="#e02020" /><rect x="14" y="5" width="4" height="8" fill="#e02020" /></svg></Box></Cell>
      <Cell><svg width="26" height="24" viewBox="0 0 26 24"><rect x="8" y="2" width="16" height="14" fill="#f8fbff" stroke="#70a8f0" strokeWidth="1.5" /><rect x="2" y="7" width="18" height="15" fill="#fff" stroke="#70a8f0" strokeWidth="1.5" /><path d="M5 12h12M5 15h12M5 18h12" stroke="#808080" /></svg></Cell>
      <Cell><Box>F10</Box></Cell>
      <Cell><Box><svg width="20" height="20" viewBox="0 0 20 20"><rect x="2" y="2" width="7" height="4" fill="#f0a020" /><rect x="10" y="8" width="8" height="4" fill="#f0a020" /><rect x="10" y="14" width="8" height="4" fill="#f0a020" /><path d="M5 6v10h5M5 10h5" fill="none" stroke="#3060c0" /></svg></Box></Cell>
      <Cell><Box><span className="text-[#f06020] text-[17px]">自</span></Box></Cell>
      <Cell><Box>F12</Box></Cell>
      <Cell><span className="w-[24px] h-[26px] rounded-[5px] bg-white border-2 border-[#40a090] flex items-center justify-center font-['Liberation_Serif',serif] italic font-bold text-[13px] text-[#2040c0]">f(x)</span></Cell>
      <Cell><Box><svg width="18" height="18" viewBox="0 0 18 18"><circle cx="9" cy="9" r="6" fill="none" stroke="#2070d0" strokeWidth="2.5" /></svg></Box></Cell>
      <div className="h-[16px] flex items-center justify-center"><span className="w-[28px] h-[2px] bg-[#c0c0c0]" /></div>
      <Cell><Box><svg width="20" height="20" viewBox="0 0 20 20"><path d="M1 6 q3 -4 6 0 t6 0 t6 0" fill="none" stroke="#e02020" /><path d="M1 11 q3 -4 6 0 t6 0 t6 0" fill="none" stroke="#2040d0" /><path d="M1 16 q3 -4 6 0 t6 0 t6 0" fill="none" stroke="#2040d0" /></svg></Box></Cell>
      <Cell><span className="text-[15px] font-bold text-[#3050c0]">RSI</span></Cell>
      <Cell><span className="text-[24px] font-bold text-[#d03030]">S</span></Cell>
      <Cell><svg width="26" height="26" viewBox="0 0 26 26"><path d="M13 1 L17 6 L15 6 L15 11 L20 11 L20 9 L25 13 L20 17 L20 15 L15 15 L15 20 L17 20 L13 25 L9 20 L11 20 L11 15 L6 15 L6 17 L1 13 L6 9 L6 11 L11 11 L11 6 L9 6 Z" fill="#1a50c8" /></svg></Cell>
      <Cell><svg width="26" height="24" viewBox="0 0 26 24"><path d="M3 21 L5 15 L19 3 L24 7 L10 19 Z" fill="#f0b040" stroke="#a07020" /><path d="M19 3 L24 7 L22 9 L17 5 Z" fill="#e06050" /></svg></Cell>
      <div className="h-[11px] flex items-center justify-center"><span className="w-[28px] h-[2px] bg-[#c0c0c0]" /></div>
      <Cell><Box>F5</Box></Cell>
      <Cell><Box><svg width="20" height="20" viewBox="0 0 20 20"><path d="M3 9 a7 6 0 0 1 13 -1 l2 -1 l-1 6 l-5 -3 l2 -1 a4 4 0 0 0 -8 1 Z" fill="#40b040" /><path d="M17 11 a7 6 0 0 1 -13 1 l-2 1 l1 -6 l5 3 l-2 1 a4 4 0 0 0 8 -1 Z" fill="#60c060" /></svg></Box></Cell>
      <Cell>1</Cell>
      <Cell>5</Cell>
      <Cell>15</Cell>
      <Cell>30</Cell>
      <Cell>60</Cell>
      <div className="h-[34.6px] flex items-center justify-center text-[20px] text-[#1a4aa0] bg-[#f8f8f8] border-t-2 border-l-2 border-[#d0d0d0]">日</div>
      <Cell>周</Cell>
      <Cell>月</Cell>
      <Cell>N</Cell>
      <Cell>多</Cell>
      <Cell>季</Cell>
      <Cell>年</Cell>
    </div>
  );
}

function StatusBar() {
  const Yi = () => <span className="font-normal text-[24px] text-[#404040]">亿</span>;
  return (
    <div className="h-[35px] bg-[#f0f0f0] pt-[3px] flex items-center text-[21px] text-[#0a8a0a] whitespace-nowrap">
      <span className="ml-[3px] mr-[3px] w-[19px] h-[20px] rounded-[3px] border-2 border-[#e09020] bg-[#f8c850]" />
      <span className="w-[55px] text-[24px] text-[#404040]">上证</span>
      <span className="w-[93px]">3355.35</span>
      <span className="w-[82px]">-48.68</span>
      <span className="w-[87px]">-1.43%</span>
      <span className="w-[95px] font-bold text-[#101010]">4875<Yi /></span>
      <span className="w-[54px] text-[24px] text-[#404040]">沪深</span>
      <span className="w-[94px]">4423.97</span>
      <span className="w-[80px]">-65.57</span>
      <span className="w-[87px]">-1.46%</span>
      <span className="w-[96px] font-bold text-[#101010]">3447<Yi /></span>
      <span className="w-[54px] text-[24px] text-[#404040]">创业</span>
      <span className="w-[93px]">2802.72</span>
      <span className="w-[83px]">-22.41</span>
      <span className="w-[86px]">-0.79%</span>
      <span className="w-[98px] font-bold text-[#101010]">2008<Yi /></span>
      <span className="h-[30px] border-l-2 border-[#b0b0b0] pl-[4px] leading-[30px] text-[24px] text-[#404040]">总成交 <span className="text-[#101010] text-[21px]">1</span></span>
    </div>
  );
}

function Watermark() {
  return (
    <div className="absolute left-[1360px] top-[1314px] w-[800px] h-[81px] bg-[#7fa9d8] flex items-center">
      <span className="ml-[15px] w-[305px] text-[56px] leading-none font-bold text-[#1a0a8c] font-['Noto_Sans_CJK_SC',sans-serif] whitespace-nowrap">公式指标网</span>
      <svg width="80" height="78" viewBox="0 0 80 78">
        <path d="M6 38 A34 34 0 0 1 34 5" fill="none" stroke="#d6664e" strokeWidth="9" />
        <path d="M46 5 A34 34 0 0 1 74 38" fill="none" stroke="#d6664e" strokeWidth="9" />
        <path d="M74 42 A34 34 0 0 1 40 74" fill="none" stroke="#e8c84a" strokeWidth="9" />
        <circle cx="40" cy="12" r="4" fill="#e8c84a" />
        <rect x="26" y="18" width="28" height="24" fill="#e8c84a" />
        <rect x="22" y="42" width="36" height="6" fill="#e8c84a" />
        <rect x="32" y="48" width="16" height="26" fill="#e8c84a" />
        <path d="M30 28h20M30 35h20M40 18v24" stroke="#7fa9d8" strokeWidth="2" />
      </svg>
      <span className="ml-[28px] text-[66px] leading-none font-bold text-white font-['Liberation_Serif',serif] whitespace-nowrap">www.9m8.cn</span>
    </div>
  );
}

export default function App() {
  return (
    <div className="relative w-[2160px] h-[1395px] overflow-hidden bg-[#1a2030] font-['Liberation_Sans','Noto_Sans_CJK_SC',sans-serif]">
      <TitleBar />
      <div className="h-[1323px] flex bg-black">
        <div className="w-[1786px] flex flex-col">
          <Toolbar />
          <div className="h-[730px] flex">
            <div className="w-[1710px]">
              <PriceInfo />
              <PriceChart />
            </div>
            <div className="w-[76px] border-l-2 border-[#a80000] pt-[30px] relative">
              <AxisLabels labels={priceLabels} top={97} height={700} ticks={[148, 197, 246, 295, 344, 392, 442, 491, 540, 589, 638, 686]} />
              <div className="absolute left-0 top-[540px] w-[74px] h-[24px] bg-[#000080] border border-[#a80000] pl-[3px] text-[17px] leading-[22px] text-[#c0c0c0]">17.61</div>
            </div>
          </div>
          <div className="h-[485px] flex border-t-2 border-[#a80000]">
            <div className="w-[1710px]">
              <VolumeInfo />
              <VolumeChart />
            </div>
            <div className="w-[76px] border-l-2 border-[#a80000] pt-[31px] relative">
              <div className="absolute left-0 top-0 w-[74px] h-[2px] bg-[#a80000]" />
              <AxisLabels labels={volLabels} top={830} height={452} ticks={[894, 953, 1011, 1070, 1128, 1186, 1244]} />
              <div className="absolute left-0 top-[459px] w-[39px] h-[24px] border border-[#a80000] text-center text-[17px] leading-[22px] text-[#a0a0a0]">X10</div>
            </div>
          </div>
          <div className="h-[24px] flex border-t-2 border-b-2 box-content border-[#a80000]">
            <DateAxis />
            <div className="w-[76px] border-l-2 border-[#a80000] text-center text-[18px] leading-[23px] text-[#c0c0c0]">日线</div>
          </div>
          <TabRows />
        </div>
        <QuotePanel />
        <Sidebar />
      </div>
      <StatusBar />
      <ImeBar />
      <Watermark />
    </div>
  );
}
